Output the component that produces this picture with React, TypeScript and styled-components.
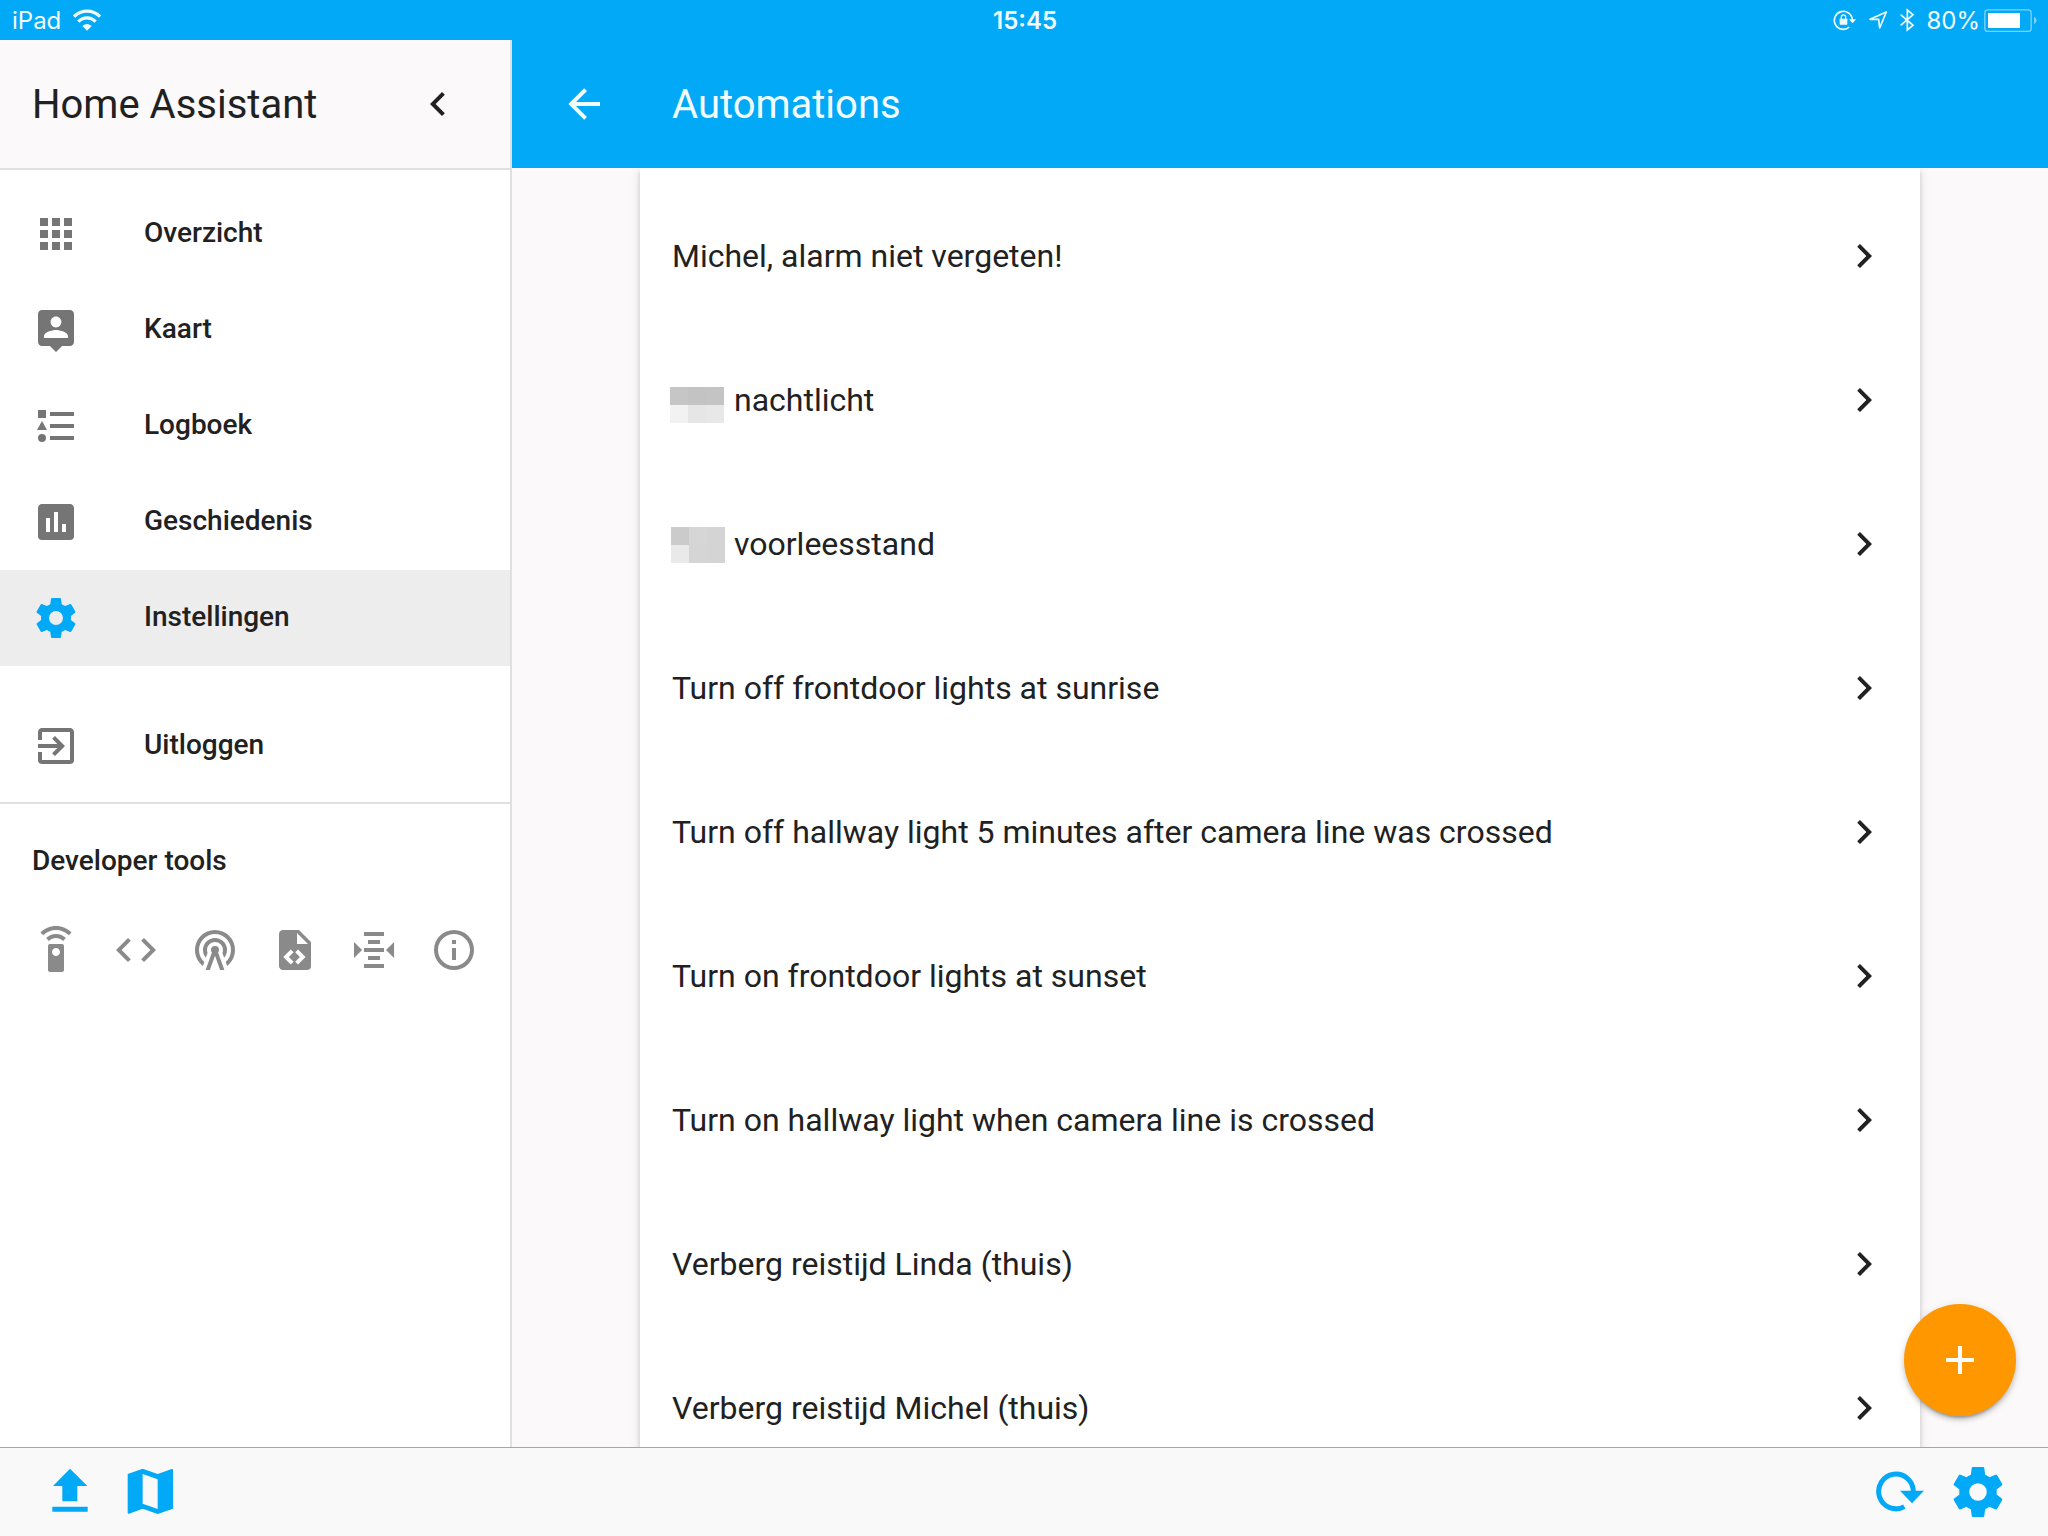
import React from "react";
import styled, { createGlobalStyle } from "styled-components";

const colors = {
  primary: "#02a9f7",
  accent: "#ff9800",
  text: "#212121",
  icon: "#757575",
  tool: "#8a8a8a",
  divider: "#e0e0e0",
  surface: "#fbf9fa",
};

const cardShadow =
  "0 4px 4px rgba(0, 0, 0, 0.14), 0 2px 10px rgba(0, 0, 0, 0.12), 0 6px 2px -4px rgba(0, 0, 0, 0.2)";

const GlobalStyle = createGlobalStyle`
  *, *::before, *::after { box-sizing: border-box; }
  body {
    margin: 0;
    color: ${colors.text};
    background: #fff;
    font-family: Roboto, "Noto Sans", sans-serif;
    font-size: 32px;
  }
  button {
    padding: 0;
    border: 0;
    background: none;
    color: inherit;
    font: inherit;
    cursor: pointer;
  }
  a { color: inherit; text-decoration: none; }
  svg { display: block; flex: none; }
`;

const Screen = styled.div`
  display: grid;
  grid-template-rows: 40px minmax(0, 1fr) auto;
  height: 100vh;
`;

const StatusBar = styled.header`
  display: grid;
  grid-template-columns: 1fr auto 1fr;
  align-items: center;
  padding: 0 10px 0 12px;
  background: ${colors.primary};
  color: #f2fdff;
  font-family: Inter, Roboto, sans-serif;
  font-size: 24px;
  line-height: 32px;
`;

const StatusGroup = styled.div<{ $end?: boolean }>`
  display: flex;
  align-items: center;
  justify-content: ${(p) => (p.$end ? "flex-end" : "flex-start")};
  gap: ${(p) => (p.$end ? "10px" : "12px")};
`;

const BatteryGroup = styled.div`
  display: flex;
  align-items: center;
  gap: 4px;
`;

const StatusText = styled.span<{ $strong?: boolean }>`
  padding-top: 2px;
  font-weight: ${(p) => (p.$strong ? 600 : 400)};
`;

const Body = styled.div`
  display: grid;
  grid-template-columns: 512px minmax(0, 1fr);
  min-height: 0;
`;

const Sidebar = styled.aside`
  border-right: 2px solid ${colors.divider};
  background: #fff;
`;

const SidebarHeader = styled.div`
  display: flex;
  align-items: center;
  justify-content: space-between;
  height: 130px;
  padding: 0 48px 0 32px;
  border-bottom: 2px solid ${colors.divider};
  background: ${colors.surface};
`;

const Title = styled.h1`
  margin: 0;
  padding-top: 2px;
  font-size: 40px;
  font-weight: 400;
  line-height: 48px;
`;

const Menu = styled.nav`
  display: flex;
  flex-direction: column;
  padding: 16px 0 8px;
  border-bottom: 2px solid ${colors.divider};
`;

const MenuItem = styled.a<{ $selected?: boolean }>`
  display: flex;
  align-items: center;
  gap: 64px;
  height: 96px;
  padding: 0 32px;
  background: ${(p) => (p.$selected ? "#ededed" : "transparent")};
  font-size: 28px;
  font-weight: 500;

  svg {
    color: ${(p) => (p.$selected ? colors.primary : colors.icon)};
  }
`;

const MenuLabel = styled.span`
  padding-bottom: 2px;
  line-height: 40px;
`;

const MenuGap = styled.div`
  height: 32px;
`;

const ToolsHeading = styled.h2`
  margin: 0;
  padding: 37px 32px 35px;
  font-size: 28px;
  font-weight: 500;
  line-height: 40px;
`;

const Tools = styled.div`
  display: flex;
  justify-content: space-between;
  padding: 10px 32px;
  color: ${colors.tool};
`;

const Panel = styled.main`
  position: relative;
  display: flex;
  flex-direction: column;
  min-height: 0;
  background: ${colors.surface};
`;

const Toolbar = styled.div`
  display: flex;
  flex: none;
  align-items: center;
  gap: 64px;
  height: 128px;
  padding: 0 48px;
  background: ${colors.primary};
  color: #f2fdff;
`;

const Scroller = styled.div`
  flex: 1;
  min-height: 0;
  padding: 0 32px;
  overflow: hidden;
`;

const Card = styled.div`
  max-width: 1280px;
  margin: 0 auto;
  padding-top: 16px;
  background: #fff;
  box-shadow: ${cardShadow};
`;

const Row = styled.a`
  display: flex;
  align-items: center;
  gap: 8px;
  height: 144px;
  padding: 0 32px;
`;

const RowLabel = styled.span`
  flex: 1;
  line-height: 48px;
`;

const Fab = styled.button`
  position: absolute;
  right: 32px;
  bottom: 31px;
  display: grid;
  place-items: center;
  width: 112px;
  height: 112px;
  border-radius: 50%;
  background: ${colors.accent};
  color: #fff;
  box-shadow: ${cardShadow};
`;

const BottomBar = styled.footer`
  display: flex;
  align-items: center;
  justify-content: space-between;
  height: 89px;
  padding: 0 40px 0 46px;
  border-top: 1px solid #a8a5a7;
  background: #f9f9f9;
  color: ${colors.primary};
`;

const BarGroup = styled.div<{ $gap: number }>`
  display: flex;
  align-items: center;
  gap: ${(p) => p.$gap}px;
`;

const paths = {
  apps: "M16,20H20V16H16M16,14H20V10H16M10,8H14V4H10M16,8H20V4H16M10,14H14V10H10M4,14H8V10H4M4,20H8V16H4M10,20H14V16H10M4,8H8V4H4V8Z",
  person:
    "M19 2H5c-1.11 0-2 .9-2 2v14c0 1.1.89 2 2 2h4l3 3 3-3h4c1.1 0 2-.9 2-2V4c0-1.1-.9-2-2-2zm-7 3.3c1.49 0 2.7 1.21 2.7 2.7 0 1.49-1.21 2.7-2.7 2.7-1.49 0-2.7-1.21-2.7-2.7 0-1.49 1.21-2.7 2.7-2.7zM18 16H6v-.9c0-2 4-3.1 6-3.1s6 1.1 6 3.1v.9z",
  list: "M5,9.5L7.5,14H2.5L5,9.5M3,4H7V8H3V4M5,20A2,2 0 0,0 7,18A2,2 0 0,0 5,16A2,2 0 0,0 3,18A2,2 0 0,0 5,20M9,5V7H21V5H9M9,19H21V17H9V19M9,13H21V11H9V13Z",
  poll: "M17,17H15V13H17M13,17H11V7H13M9,17H7V10H9M19,3H5C3.89,3 3,3.89 3,5V19A2,2 0 0,0 5,21H19A2,2 0 0,0 21,19V5C21,3.89 20.1,3 19,3Z",
  cog: "M12,15.5A3.5,3.5 0 0,1 8.5,12A3.5,3.5 0 0,1 12,8.5A3.5,3.5 0 0,1 15.5,12A3.5,3.5 0 0,1 12,15.5M19.43,12.97C19.47,12.65 19.5,12.33 19.5,12C19.5,11.67 19.47,11.34 19.43,11L21.54,9.37C21.73,9.22 21.78,8.95 21.66,8.73L19.66,5.27C19.54,5.05 19.27,4.96 19.05,5.05L16.56,6.05C16.04,5.66 15.5,5.32 14.87,5.07L14.5,2.42C14.46,2.18 14.25,2 14,2H10C9.75,2 9.54,2.18 9.5,2.42L9.13,5.07C8.5,5.32 7.96,5.66 7.44,6.05L4.95,5.05C4.73,4.96 4.46,5.05 4.34,5.27L2.34,8.73C2.21,8.95 2.27,9.22 2.46,9.37L4.57,11C4.53,11.34 4.5,11.67 4.5,12C4.5,12.33 4.53,12.65 4.57,12.97L2.46,14.63C2.27,14.78 2.21,15.05 2.34,15.27L4.34,18.73C4.46,18.95 4.73,19.03 4.95,18.95L7.44,17.94C7.96,18.34 8.5,18.68 9.13,18.93L9.5,21.58C9.54,21.82 9.75,22 10,22H14C14.25,22 14.46,21.82 14.5,21.58L14.87,18.93C15.5,18.67 16.04,18.34 16.56,17.94L19.05,18.95C19.27,19.03 19.54,18.95 19.66,18.73L21.66,15.27C21.78,15.05 21.73,14.78 21.54,14.63L19.43,12.97Z",
  exit: "M19,3H5C3.89,3 3,3.89 3,5V9H5V5H19V19H5V15H3V19A2,2 0 0,0 5,21H19A2,2 0 0,0 21,19V5C21,3.89 20.1,3 19,3M10.08,15.58L11.5,17L16.5,12L11.5,7L10.08,8.41L12.67,11H3V13H12.67L10.08,15.58Z",
  remote:
    "M15 9H9c-.55 0-1 .45-1 1v12c0 .55.45 1 1 1h6c.55 0 1-.45 1-1V10c0-.55-.45-1-1-1zm-3 6c-1.1 0-2-.9-2-2s.9-2 2-2 2 .9 2 2-.9 2-2 2zM7.05 6.05l1.41 1.41C9.37 6.56 10.62 6 12 6s2.63.56 3.54 1.46l1.41-1.41C15.68 4.78 13.93 4 12 4s-3.68.78-4.95 2.05zM12 0C8.96 0 6.21 1.23 4.22 3.22l1.41 1.41C7.26 3.01 9.51 2 12 2s4.74 1.01 6.36 2.64l1.41-1.41C17.79 1.23 15.04 0 12 0z",
  code: "M14.6,16.6L19.2,12L14.6,7.4L16,6L22,12L16,18L14.6,16.6M9.4,16.6L4.8,12L9.4,7.4L8,6L2,12L8,18L9.4,16.6Z",
  tower:
    "M12,10A2,2 0 0,1 14,12C14,12.5 13.82,12.94 13.53,13.29L16.7,22H14.57L12,14.93L9.43,22H7.3L10.47,13.29C10.18,12.94 10,12.5 10,12A2,2 0 0,1 12,10M12,8A4,4 0 0,0 8,12C8,12.5 8.1,13 8.28,13.46L7.4,15.86C6.53,14.81 6,13.47 6,12A6,6 0 0,1 12,6A6,6 0 0,1 18,12C18,13.47 17.47,14.81 16.6,15.86L15.72,13.46C15.9,13 16,12.5 16,12A4,4 0 0,0 12,8M12,4A8,8 0 0,0 4,12C4,14.36 5,16.5 6.64,17.94L5.92,19.94C3.54,18.11 2,15.23 2,12A10,10 0 0,1 12,2A10,10 0 0,1 22,12C22,15.23 20.46,18.11 18.08,19.94L17.36,17.94C19,16.5 20,14.36 20,12A8,8 0 0,0 12,4Z",
  file: "M13,9H18.5L13,3.5V9M6,2H14L20,8V20A2,2 0 0,1 18,22H6C4.89,22 4,21.1 4,20V4C4,2.89 4.89,2 6,2M6.12,15.5L9.86,19.24L11.28,17.83L8.95,15.5L11.28,13.17L9.86,11.76L6.12,15.5M17.28,15.5L13.54,11.76L12.12,13.17L14.45,15.5L12.12,17.83L13.54,19.24L17.28,15.5Z",
  altimeter:
    "M7,3V5H17V3H7M9,7V9H15V7H9M2,7.96V16.04L6.03,12L2,7.96M22.03,7.96L18,12L22.03,16.04V7.96M7,11V13H17V11H7M9,15V17H15V15H9M7,19V21H17V19H7Z",
  info: "M11,9H13V7H11M12,20C7.59,20 4,16.41 4,12C4,7.59 7.59,4 12,4C16.41,4 20,7.59 20,12C20,16.41 16.41,20 12,20M12,2A10,10 0 0,0 2,12A10,10 0 0,0 12,22A10,10 0 0,0 22,12A10,10 0 0,0 12,2M11,17H13V11H11V17Z",
  chevronLeft:
    "M15.41,16.58L10.83,12L15.41,7.41L14,6L8,12L14,18L15.41,16.58Z",
  chevronRight:
    "M8.59,16.58L13.17,12L8.59,7.41L10,6L16,12L10,18L8.59,16.58Z",
  back: "M20,11V13H8L13.5,18.5L12.08,19.92L4.16,12L12.08,4.08L13.5,5.5L8,11H20Z",
  plus: "M19,13H13V19H11V13H5V11H11V5H13V11H19V13Z",
};

type IconName = keyof typeof paths;

const Icon = ({ name, size = 48 }: { name: IconName; size?: number }) => (
  <svg width={size} height={size} viewBox="0 0 24 24" fill="currentColor" aria-hidden="true">
    <path d={paths[name]} />
  </svg>
);

const WifiIcon = () => (
  <svg width="28" height="24" viewBox="0 0 84 72" fill="none" stroke="currentColor" strokeWidth="10" aria-hidden="true">
    <path d="M3 26C25 4 59 4 81 26" />
    <path d="M16 41C31 26 53 26 68 41" />
    <path d="M28 54Q42 42 56 54L42 68Z" fill="currentColor" stroke="none" />
  </svg>
);

const RotationLockIcon = () => (
  <svg width="26" height="24" viewBox="160 24 78 72" fill="none" stroke="currentColor" aria-hidden="true">
    <path d="M221 60A27 27 0 1 0 212 81" strokeWidth="5" />
    <path d="M211 58H232L221.500 70Z" fill="currentColor" stroke="none" />
    <rect x="183" y="56" width="23" height="18" rx="2" fill="currentColor" stroke="none" />
    <path d="M188 57V51a6.500 6.500 0 0 1 13 0V57" strokeWidth="4" />
  </svg>
);

const LocationIcon = () => (
  <svg width="20" height="24" viewBox="270 24 60 72" fill="none" stroke="currentColor" strokeWidth="5" aria-hidden="true">
    <path d="M325 36L276 58H302L305 84Z" strokeLinejoin="round" />
  </svg>
);

const BluetoothIcon = () => (
  <svg width="18" height="24" viewBox="360 24 54 72" fill="none" stroke="currentColor" strokeWidth="5" aria-hidden="true">
    <path d="M368 44L405 76L388 90V30L405 44L368 76" strokeLinejoin="miter" />
  </svg>
);

const BatteryIcon = () => (
  <svg width="54" height="24" viewBox="612 24 162 72" fill="currentColor" aria-hidden="true">
    <rect x="614.500" y="29.500" width="139" height="65" rx="9" fill="none" stroke="currentColor" strokeWidth="4" opacity="0.5" />
    <rect x="624" y="39" width="96" height="45" fill="#fff" />
    <path d="M762 50Q770 54 770 61T762 73Z" opacity="0.5" />
  </svg>
);

const UploadIcon = () => (
  <svg width="48" height="48" viewBox="138 114 144 144" fill="currentColor" aria-hidden="true">
    <path d="M210 116L262 168H232V214H187V168H159ZM157 230H263V245H157Z" />
  </svg>
);

const MapIcon = () => (
  <svg width="48" height="48" viewBox="378 114 144 144" fill="currentColor" fillRule="evenodd" aria-hidden="true">
    <path d="M383 132L428 116L473 132L515 117Q519 116 519 120V236L473 252L428 236L387 251Q383 252 383 248ZM428 132V221L473 237V148Z" />
  </svg>
);

const RefreshIcon = () => (
  <svg width="48" height="48" viewBox="166 564 144 144" fill="none" stroke="currentColor" aria-hidden="true">
    <path d="M278 636A52 52 0 1 0 251 680" strokeWidth="15" />
    <path d="M238 632H310L274 670Z" fill="currentColor" stroke="none" />
  </svg>
);

type Mask = { left: number; top: number; cells: string[] };

/* Pixelated name: a 3 by 2 block of grey cells. */
const MaskedName = ({ left, top, cells }: Mask) => (
  <svg width="54" height="48" viewBox="0 0 54 48" overflow="visible" shapeRendering="crispEdges" aria-hidden="true">
    {cells.map((fill, i) => (
      <rect
        key={i}
        x={left + (i % 3) * 18}
        y={top + Math.floor(i / 3) * 18}
        width="18"
        height="18"
        fill={fill}
      />
    ))}
  </svg>
);

const menu: { icon: IconName; label: string; selected?: boolean }[] = [
  { icon: "apps", label: "Overzicht" },
  { icon: "person", label: "Kaart" },
  { icon: "list", label: "Logboek" },
  { icon: "poll", label: "Geschiedenis" },
  { icon: "cog", label: "Instellingen", selected: true },
];

const tools: { icon: IconName; label: string }[] = [
  { icon: "remote", label: "Services" },
  { icon: "code", label: "States" },
  { icon: "tower", label: "Events" },
  { icon: "file", label: "Templates" },
  { icon: "altimeter", label: "MQTT" },
  { icon: "info", label: "Info" },
];

const automations: { label: string; mask?: Mask }[] = [
  { label: "Michel, alarm niet vergeten!" },
  {
    label: "nachtlicht",
    mask: { left: -2, top: 11, cells: ["#c6c6c6", "#c3c3c3", "#c4c4c4", "#f2f2f2", "#e6e6e6", "#e8e8e8"] },
  },
  {
    label: "voorleesstand",
    mask: { left: -1, top: 7, cells: ["#cbcbcb", "#d6d6d6", "#d4d4d4", "#e9e9e9", "#d5d5d5", "#d4d4d4"] },
  },
  { label: "Turn off frontdoor lights at sunrise" },
  { label: "Turn off hallway light 5 minutes after camera line was crossed" },
  { label: "Turn on frontdoor lights at sunset" },
  { label: "Turn on hallway light when camera line is crossed" },
  { label: "Verberg reistijd Linda (thuis)" },
  { label: "Verberg reistijd Michel (thuis)" },
];

export default function App() {
  return (
    <Screen>
      <GlobalStyle />
      <StatusBar>
        <StatusGroup>
          <StatusText>iPad</StatusText>
          <WifiIcon />
        </StatusGroup>
        <StatusText as="time" $strong>
          15:45
        </StatusText>
        <StatusGroup $end>
          <RotationLockIcon />
          <LocationIcon />
          <BluetoothIcon />
          <BatteryGroup>
            <StatusText>80%</StatusText>
            <BatteryIcon />
          </BatteryGroup>
        </StatusGroup>
      </StatusBar>

      <Body>
        <Sidebar>
          <SidebarHeader>
            <Title>Home Assistant</Title>
            <button type="button" aria-label="Close sidebar">
              <Icon name="chevronLeft" />
            </button>
          </SidebarHeader>
          <Menu>
            {menu.map((item) => (
              <MenuItem key={item.label} href="#" $selected={item.selected}>
                <Icon name={item.icon} />
                <MenuLabel>{item.label}</MenuLabel>
              </MenuItem>
            ))}
            <MenuGap />
            <MenuItem href="#">
              <Icon name="exit" />
              <MenuLabel>Uitloggen</MenuLabel>
            </MenuItem>
          </Menu>
          <ToolsHeading>Developer tools</ToolsHeading>
          <Tools>
            {tools.map((tool) => (
              <button key={tool.label} type="button" aria-label={tool.label}>
                <Icon name={tool.icon} />
              </button>
            ))}
          </Tools>
        </Sidebar>

        <Panel>
          <Toolbar>
            <button type="button" aria-label="Back">
              <Icon name="back" />
            </button>
            <Title>Automations</Title>
          </Toolbar>
          <Scroller>
            <Card>
              {automations.map((item) => (
                <Row key={item.label} href="#">
                  {item.mask && <MaskedName {...item.mask} />}
                  <RowLabel>{item.label}</RowLabel>
                  <Icon name="chevronRight" />
                </Row>
              ))}
            </Card>
          </Scroller>
          <Fab type="button" aria-label="Add automation">
            <Icon name="plus" />
          </Fab>
        </Panel>
      </Body>

      <BottomBar>
        <BarGroup $gap={32}>
          <button type="button" aria-label="Upload">
            <UploadIcon />
          </button>
          <button type="button" aria-label="Map">
            <MapIcon />
          </button>
        </BarGroup>
        <BarGroup $gap={24}>
          <button type="button" aria-label="Refresh">
            <RefreshIcon />
          </button>
          <button type="button" aria-label="Settings">
            <Icon name="cog" size={60} />
          </button>
        </BarGroup>
      </BottomBar>
    </Screen>
  );
}
